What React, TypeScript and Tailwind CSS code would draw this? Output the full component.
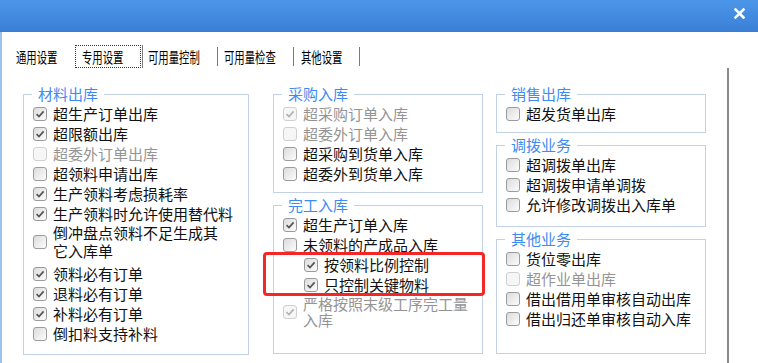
import { ReactNode } from "react";

type RowProps = {
  children: ReactNode;
  checked?: boolean;
  disabled?: boolean;
  indent?: boolean;
  className?: string;
  textClass?: string;
};

function Check({ checked, disabled }: { checked?: boolean; disabled?: boolean }) {
  return (
    <span
      className={`flex h-[14px] w-[14px] shrink-0 items-center justify-center rounded-[3px] border ${
        disabled
          ? "border-[#d0d0d0] bg-[#f6f6f6]"
          : "border-[#9b9b9b] bg-gradient-to-br from-[#dcdcdc] to-[#fcfcfc]"
      }`}
    >
      {checked && (
        <svg width="10" height="10" viewBox="0 0 10 10">
          <path
            d="M1.6 5.1 L4 7.5 L8.6 2.4"
            fill="none"
            stroke={disabled ? "#b2b2b2" : "#555555"}
            strokeWidth="1.7"
          />
        </svg>
      )}
    </span>
  );
}

function Row({ children, checked, disabled, indent, className = "", textClass = "leading-[20px]" }: RowProps) {
  return (
    <div className={`flex items-center gap-[6px] ${indent ? "pl-[30px]" : "pl-[9px]"} ${className}`}>
      <Check checked={checked} disabled={disabled} />
      <span className={`whitespace-nowrap text-[15px] ${textClass} ${disabled ? "text-[#949494]" : "text-[#111111]"}`}>
        {children}
      </span>
    </div>
  );
}

function Group({ title, children, className = "" }: { title: string; children: ReactNode; className?: string }) {
  return (
    <fieldset className={`min-w-0 border border-[#c2d1e6] ${className}`}>
      <legend className="ml-[8px] px-[6px] text-[15px] leading-[16px] text-[#3d8bf2]">{title}</legend>
      <div className="pt-[2px]">{children}</div>
    </fieldset>
  );
}

function TabText({ children }: { children: string }) {
  return (
    <span className="inline-block origin-left scale-x-[0.69] whitespace-nowrap text-[15px] leading-[16px] text-black">
      {children}
    </span>
  );
}

export default function App() {
  return (
    <div className="relative h-[363px] w-[758px] overflow-hidden bg-white font-['Noto_Sans_CJK_SC','Noto_Sans',sans-serif]">
      <div className="flex h-[32px] justify-end bg-gradient-to-b from-[#4c96e9] to-[#3a7fd7]">
        <svg className="mr-[13px] mt-[8px]" width="11" height="11" viewBox="0 0 11 11">
          <path d="M1.5 1.5 L9.5 9.5 M9.5 1.5 L1.5 9.5" stroke="white" strokeWidth="2.6" strokeLinecap="square" />
        </svg>
      </div>

      <div className="flex h-[331px]">
        <div className="w-[2px] bg-[#9dc1ee]" />
        <div className="flex flex-col">
          {/* tabs */}
          <div className="mt-[13px] flex h-[23px] items-stretch">
            <div className="ml-[14px] flex w-[59px] items-center">
              <TabText>通用设置</TabText>
            </div>
            <div className="flex w-[66px] items-center border border-dotted border-[#333] pl-[6px]">
              <TabText>专用设置</TabText>
            </div>
            <div className="ml-[1px] w-[1px] bg-[#7b7b7b]" />
            <div className="flex w-[74px] items-center pl-[5px]">
              <TabText>可用量控制</TabText>
            </div>
            <div className="my-[2px] w-[1px] bg-[#7b7b7b]" />
            <div className="flex w-[75px] items-center pl-[6px]">
              <TabText>可用量检查</TabText>
            </div>
            <div className="my-[2px] w-[1px] bg-[#7b7b7b]" />
            <div className="flex w-[65px] items-center pl-[7px]">
              <TabText>其他设置</TabText>
            </div>
            <div className="my-[2px] w-[1px] bg-[#7b7b7b]" />
          </div>

          {/* panel */}
          <div className="flex w-[727px] flex-1 items-start border-r-2 border-[#8a8a8a] pl-[21px] pt-[18px]">
            <Group title="材料出库" className="w-[226px] pb-[10px]">
              <Row checked>超生产订单出库</Row>
              <Row checked>超限额出库</Row>
              <Row disabled>超委外订单出库</Row>
              <Row>超领料申请出库</Row>
              <Row checked>生产领料考虑损耗率</Row>
              <Row checked>生产领料时允许使用替代料</Row>
              <Row className="mb-[4px]" textClass="leading-[18px]">
                倒冲盘点领料不足生成其
                <br />
                它入库单
              </Row>
              <Row checked>领料必有订单</Row>
              <Row checked>退料必有订单</Row>
              <Row checked>补料必有订单</Row>
              <Row>倒扣料支持补料</Row>
            </Group>

            <div className="ml-[24px] flex h-[268px] w-[210px] flex-col gap-[4px]">
              <Group title="采购入库" className="pb-[8px]">
                <Row checked disabled>超采购订单入库</Row>
                <Row disabled>超委外订单入库</Row>
                <Row>超采购到货单入库</Row>
                <Row>超委外到货单入库</Row>
              </Group>
              <Group title="完工入库" className="flex-1">
                <Row checked>超生产订单入库</Row>
                <Row>未领料的产成品入库</Row>
                <div className="relative">
                  <Row checked indent>按领料比例控制</Row>
                  <Row checked indent>只控制关键物料</Row>
                  <div className="absolute -bottom-[1px] -left-[11px] -right-[3px] -top-[3px] rounded-[4px] border-[3px] border-[#f42626]" />
                </div>
                <Row checked disabled className="mt-[1px]" textClass="leading-[16px]">
                  严格按照末级工序完工量
                  <br />
                  入库
                </Row>
              </Group>
            </div>

            <div className="ml-[13px] flex h-[268px] w-[210px] flex-col gap-[4px]">
              <Group title="销售出库" className="pb-[8px]">
                <Row>超发货单出库</Row>
              </Group>
              <Group title="调拨业务" className="pb-[11px]">
                <Row>超调拨单出库</Row>
                <Row>超调拨申请单调拨</Row>
                <Row>允许修改调拨出入库单</Row>
              </Group>
              <Group title="其他业务" className="flex-1">
                <Row>货位零出库</Row>
                <Row disabled>超作业单出库</Row>
                <Row>借出借用单审核自动出库</Row>
                <Row>借出归还单审核自动入库</Row>
              </Group>
            </div>
          </div>
        </div>
      </div>
    </div>
  );
}
